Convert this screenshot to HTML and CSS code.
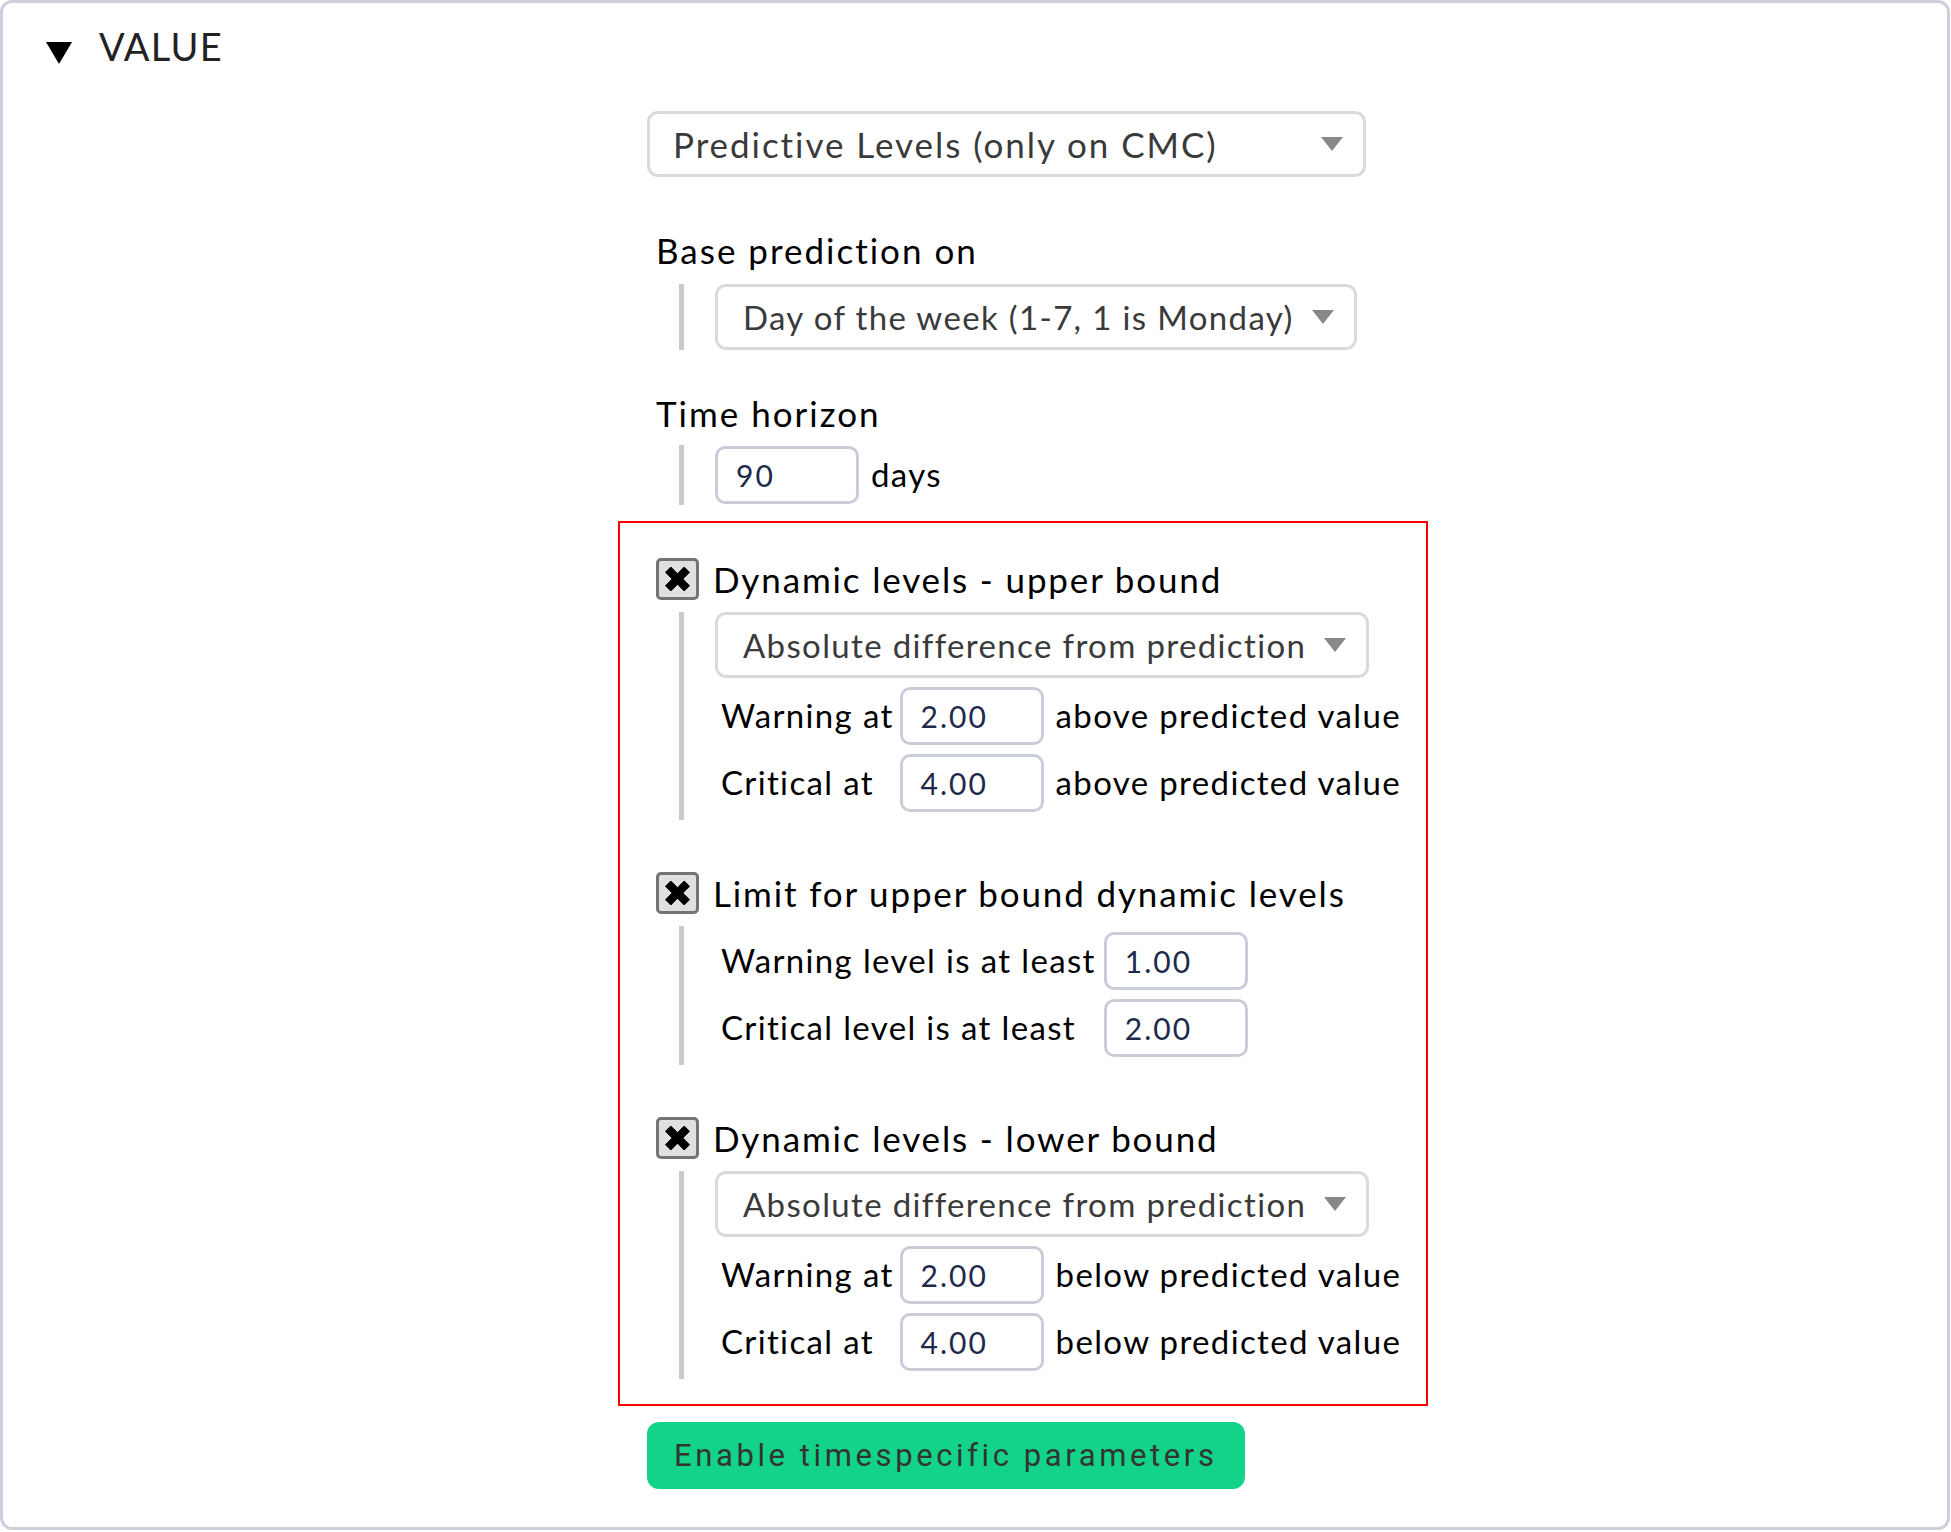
FILE: index.html
```html
<!DOCTYPE html>
<html>
<head>
<meta charset="utf-8">
<link rel="stylesheet" href="styles.css">
</head>
<body>
<div class="frame">
  <div class="header">
    <span class="tri"></span>
    <span class="htitle">VALUE</span>
  </div>
  <div class="content">
    <div class="select main"><span>Predictive Levels (only on CMC)</span><span class="arrow"></span></div>

    <div class="label">Base prediction on</div>
    <div class="nest">
      <div class="select"><span>Day of the week (1-7, 1 is Monday)</span><span class="arrow"></span></div>
    </div>

    <div class="label l2">Time horizon</div>
    <div class="nest slim">
      <div class="row"><div class="input">90</div><span class="unit">days</span></div>
    </div>

    <div class="redbox">
      <div class="cbrow">
        <span class="cb"><svg viewBox="0 0 24 24" width="25" height="24"><path d="M0 5.3 L5.3 0 L12 6.7 L18.7 0 L24 5.3 L17.3 12 L24 18.7 L18.7 24 L12 17.3 L5.3 24 L0 18.7 L6.7 12 Z" fill="#000" stroke="#000" stroke-width="1" stroke-linejoin="round"/></svg></span>
        <span class="cbtitle">Dynamic levels - upper bound</span>
      </div>
      <div class="nest">
        <div class="select"><span>Absolute difference from prediction</span><span class="arrow"></span></div>
        <div class="grid">
          <span class="glabel">Warning at</span><div class="input">2.00</div><span class="unit">above predicted value</span>
          <span class="glabel">Critical at</span><div class="input">4.00</div><span class="unit">above predicted value</span>
        </div>
      </div>

      <div class="cbrow sec">
        <span class="cb"><svg viewBox="0 0 24 24" width="25" height="24"><path d="M0 5.3 L5.3 0 L12 6.7 L18.7 0 L24 5.3 L17.3 12 L24 18.7 L18.7 24 L12 17.3 L5.3 24 L0 18.7 L6.7 12 Z" fill="#000" stroke="#000" stroke-width="1" stroke-linejoin="round"/></svg></span>
        <span class="cbtitle">Limit for upper bound dynamic levels</span>
      </div>
      <div class="nest top">
        <div class="grid nomargin two">
          <span class="glabel">Warning level is at least</span><div class="input">1.00</div>
          <span class="glabel">Critical level is at least</span><div class="input">2.00</div>
        </div>
      </div>

      <div class="cbrow sec">
        <span class="cb"><svg viewBox="0 0 24 24" width="25" height="24"><path d="M0 5.3 L5.3 0 L12 6.7 L18.7 0 L24 5.3 L17.3 12 L24 18.7 L18.7 24 L12 17.3 L5.3 24 L0 18.7 L6.7 12 Z" fill="#000" stroke="#000" stroke-width="1" stroke-linejoin="round"/></svg></span>
        <span class="cbtitle">Dynamic levels - lower bound</span>
      </div>
      <div class="nest">
        <div class="select"><span>Absolute difference from prediction</span><span class="arrow"></span></div>
        <div class="grid">
          <span class="glabel">Warning at</span><div class="input">2.00</div><span class="unit">below predicted value</span>
          <span class="glabel">Critical at</span><div class="input">4.00</div><span class="unit">below predicted value</span>
        </div>
      </div>
    </div>

    <div class="btn">Enable timespecific parameters</div>
  </div>
</div>
</body>
</html>
```

FILE: styles.css
```css
html, body {
  margin: 0;
  padding: 0;
  background: #ffffff;
}

body {
  font-family: Lato, "Open Sans", sans-serif;
  color: #000;
}

.frame {
  box-sizing: border-box;
  width: 1950px;
  height: 1530px;
  border: 3px solid #cdcfdc;
  border-radius: 12px;
  background: #fff;
}

.header {
  display: flex;
  align-items: flex-start;
  padding: 20px 0 0 43px;
  height: 46px;
}

.tri {
  width: 0;
  height: 0;
  border-left: 13px solid transparent;
  border-right: 13px solid transparent;
  border-top: 22px solid #000;
  margin-top: 19px;
  margin-right: 27px;
}

.htitle {
  font-size: 38px;
  line-height: 46px;
  letter-spacing: 1.2px;
  color: #222;
}

.content {
  padding-left: 644px;
  padding-top: 42px;
}

.select {
  box-sizing: border-box;
  display: inline-flex;
  align-items: center;
  gap: 18px;
  height: 66px;
  border: 3px solid #dadada;
  border-radius: 11px;
  padding: 0 20px 0 25px;
  font-size: 33px;
  line-height: 42px;
  letter-spacing: 1.35px;
  color: #3a3a3a;
  background: #fff;
}

.select.main {
  display: flex;
  justify-content: space-between;
  width: 719px;
  padding-left: 23px;
  font-size: 35px;
  letter-spacing: 1.95px;
}

.arrow {
  width: 0;
  height: 0;
  border-left: 11px solid transparent;
  border-right: 11px solid transparent;
  border-top: 14px solid #888;
}

.label {
  margin: 52px 0 0 9px;
  font-size: 35px;
  line-height: 42px;
  letter-spacing: 2px;
}

.label.l2 {
  margin-top: 42px;
}

.nest {
  margin: 13px 0 0 32px;
  border-left: 5px solid #cacaca;
  padding-left: 31px;
}

.nest.slim {
  margin-top: 11px;
  padding-top: 1px;
  padding-bottom: 1px;
}

.row {
  display: flex;
  align-items: baseline;
  gap: 12px;
}

.input {
  box-sizing: border-box;
  width: 144px;
  height: 58px;
  border: 3px solid #cbccda;
  border-radius: 10px;
  padding: 8px 0 0 18px;
  font-size: 30px;
  line-height: 36px;
  letter-spacing: 2px;
  color: #1d2a4c;
}

.unit {
  font-size: 33px;
  letter-spacing: 1.35px;
  line-height: 42px;
}

.redbox {
  margin: 16px 0 0 -29px;
  width: 810px;
  box-sizing: border-box;
  border: 2px solid #f00;
  padding: 35px 0 25px 27px;
}

.cbrow {
  display: flex;
  align-items: center;
  gap: 14px;
  margin-left: 9px;
  height: 42px;
}

.cbrow.sec {
  margin-top: 52px;
}

.cb {
  box-sizing: border-box;
  width: 43px;
  height: 42px;
  border: 3px solid #747474;
  border-radius: 5px;
  background: #e0e0e0;
  display: flex;
  align-items: center;
  justify-content: center;
}

.cb svg {
  display: block;
}

.cbtitle {
  font-size: 35px;
  line-height: 42px;
  letter-spacing: 1.85px;
}

.redbox .nest {
  margin-top: 12px;
  padding-bottom: 8px;
}

.redbox .nest.top {
  padding-top: 6px;
}

.grid {
  display: grid;
  grid-template-columns: auto auto auto;
  justify-content: start;
  align-items: baseline;
  column-gap: 6px;
  row-gap: 9px;
  margin-top: 9px;
}

.grid.two {
  grid-template-columns: auto auto;
  column-gap: 8px;
}

.grid.nomargin {
  margin-top: 0;
}

.glabel {
  padding-left: 6px;
  font-size: 33px;
  line-height: 42px;
  letter-spacing: 1.35px;
}

.grid .unit {
  margin-left: 6px;
}

.btn {
  box-sizing: border-box;
  display: inline-block;
  margin-top: 16px;
  height: 67px;
  padding: 0 27px 0 27px;
  border-radius: 12px;
  background: #13d389;
  color: #333;
  font-family: Roboto, "Liberation Sans", sans-serif;
  font-size: 31px;
  line-height: 67px;
  letter-spacing: 3.6px;
}
```
